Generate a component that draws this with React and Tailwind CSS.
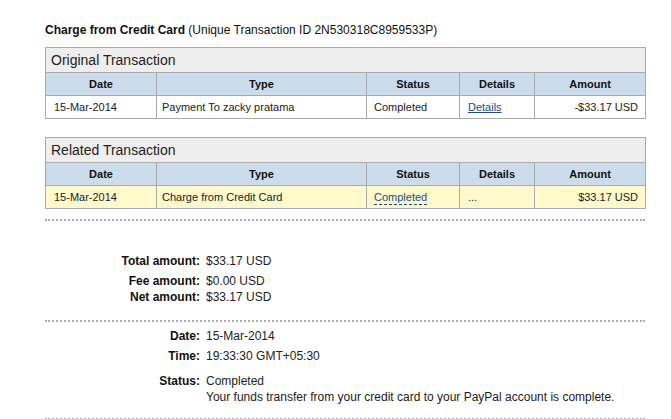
import React from 'react';

const cols = [111, 210, 93, 75, 111];

function TxTable({ title, row, highlight }) {
  const rowBg = highlight ? 'bg-[#fff9cc]' : 'bg-white';
  const td = 'border border-[#aaaaaa] h-[23px] py-0 text-[11px] text-[#222]';
  return (
    <table className="w-[600px] table-fixed border-collapse">
      <colgroup>
        {cols.map((w, i) => (
          <col key={i} style={{ width: w }} />
        ))}
      </colgroup>
      <thead>
        <tr className="bg-[#eeeeee]">
          <th colSpan={5} className="border border-[#aaaaaa] h-[25px] py-0 pl-[5px] text-left text-[14px] font-normal text-[#222]">
            {title}
          </th>
        </tr>
        <tr className="bg-[#ccdcec]">
          {['Date', 'Type', 'Status', 'Details', 'Amount'].map((h) => (
            <th key={h} className="border border-[#aaaaaa] h-[23px] py-0 text-center text-[11px] font-bold text-[#111]">
              {h}
            </th>
          ))}
        </tr>
      </thead>
      <tbody>
        <tr className={rowBg}>
          <td className={td + ' pl-[8px]'}>{row.date}</td>
          <td className={td + ' pl-[5px]'}>{row.type}</td>
          <td className={td + ' pl-[7px]'}>
            {highlight ? (
              <span className="text-[#1a4c8c] border-b border-dashed border-[#1a4c8c] pb-[1px]">{row.status}</span>
            ) : (
              row.status
            )}
          </td>
          <td className={td + ' pl-[8px]'}>
            {row.link ? <a href="#" className="text-[#1a4c8c] underline">Details</a> : '...'}
          </td>
          <td className={td + ' pr-[7px] text-right'}>{row.amount}</td>
        </tr>
      </tbody>
    </table>
  );
}

function Line({ label, value, className = '' }) {
  return (
    <div className={'flex h-[16px] items-center text-[12px] ' + className}>
      <div className="w-[155px] text-right font-bold text-[#111]">{label}</div>
      <div className="pl-[6px] text-[#222]">{value}</div>
    </div>
  );
}

export default function App() {
  return (
    <div className="min-h-screen bg-white pl-[45px] pt-[22px] font-['Liberation_Sans',Arial,sans-serif]">
      <div className="w-[600px]">
        <div className="h-[16px] text-[12px] leading-[16px] text-[#111]">
          <span className="font-bold">Charge from Credit Card</span> (Unique Transaction ID 2N530318C8959533P)
        </div>

        <div className="mt-[9px]">
          <TxTable
            title="Original Transaction"
            row={{ date: '15-Mar-2014', type: 'Payment To zacky pratama', status: 'Completed', link: true, amount: '-$33.17 USD' }}
          />
        </div>

        <div className="mt-[18px]">
          <TxTable
            title="Related Transaction"
            highlight
            row={{ date: '15-Mar-2014', type: 'Charge from Credit Card', status: 'Completed', link: false, amount: '$33.17 USD' }}
          />
        </div>

        <div className="mt-[10px] border-t-2 border-dotted border-[#aaaaaa] pt-[32px] pb-[15px]">
          <Line label="Total amount:" value="$33.17 USD" className="mb-[4px]" />
          <Line label="Fee amount:" value="$0.00 USD" />
          <Line label="Net amount:" value="$33.17 USD" />
        </div>

        <div className="border-t-2 border-dotted border-[#aaaaaa] pt-[6px] pb-[13px]">
          <Line label="Date:" value="15-Mar-2014" className="mb-[4px]" />
          <Line label="Time:" value="19:33:30 GMT+05:30" className="mb-[9px]" />
          <Line label="Status:" value="Completed" />
          <Line label="" value="Your funds transfer from your credit card to your PayPal account is complete." />
        </div>

        <div className="border-t-2 border-dotted border-[#aaaaaa]"></div>
      </div>
    </div>
  );
}
